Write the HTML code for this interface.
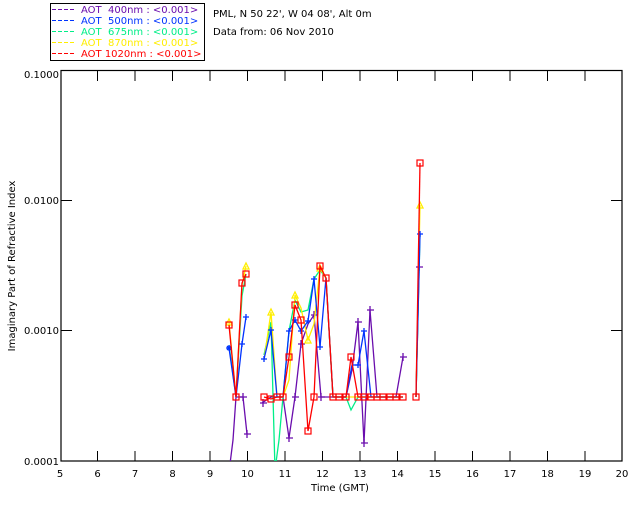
<!DOCTYPE html>
<html><head><style>
html,body{margin:0;padding:0;background:#fff;}
body{width:640px;height:512px;overflow:hidden;font-family:"DejaVu Sans","Liberation Sans",sans-serif;}
svg text{font-family:"DejaVu Sans","Liberation Sans",sans-serif;font-size:10px;}
</style></head><body>
<svg width="640" height="512" xmlns="http://www.w3.org/2000/svg">
<defs>
<clipPath id="c"><rect x="61" y="71" width="561" height="390"/></clipPath>
</defs>
<!-- legend -->
<rect x="50.5" y="3.5" width="154" height="57" fill="none" stroke="#000"/>
<g stroke-dasharray="4,2" stroke-width="1">
<line x1="52" y1="9.5" x2="74" y2="9.5" stroke="#6a0dad"/>
<line x1="52" y1="20.5" x2="74" y2="20.5" stroke="#0033ff"/>
<line x1="52" y1="31.5" x2="74" y2="31.5" stroke="#00ee88"/>
<line x1="52" y1="42.5" x2="74" y2="42.5" stroke="#ffee00"/>
<line x1="52" y1="53.5" x2="74" y2="53.5" stroke="#ff0000"/>
</g>
<text x="81" y="13" fill="#6a0dad" xml:space="preserve">AOT  400nm : &lt;0.001&gt;</text>
<text x="81" y="24" fill="#0033ff" xml:space="preserve">AOT  500nm : &lt;0.001&gt;</text>
<text x="81" y="35" fill="#00ee88" xml:space="preserve">AOT  675nm : &lt;0.001&gt;</text>
<text x="81" y="46" fill="#ffee00" xml:space="preserve">AOT  870nm : &lt;0.001&gt;</text>
<text x="81" y="57" fill="#ff0000" xml:space="preserve">AOT 1020nm : &lt;0.001&gt;</text>
<text x="213" y="17" fill="#000">PML, N 50 22', W 04 08', Alt 0m</text>
<text x="213" y="35" fill="#000">Data from: 06 Nov 2010</text>
<!-- axes -->
<rect x="61" y="70.5" width="561" height="390.5" fill="none" stroke="#000" stroke-width="1.2"/>
<g stroke="#000" stroke-width="1">
<path d="M97.5 461v-10M135 461v-10M172.5 461v-10M210 461v-10M247.5 461v-10M285 461v-10M322.5 461v-10M360 461v-10M397.5 461v-10M435 461v-10M472.5 461v-10M510 461v-10M547.5 461v-10M585 461v-10"/>
<path d="M97.5 71v10M135 71v10M172.5 71v10M210 71v10M247.5 71v10M285 71v10M322.5 71v10M360 71v10M397.5 71v10M435 71v10M472.5 71v10M510 71v10M547.5 71v10M585 71v10"/>
<path d="M61 200.5h11M61 330.5h11M622 200.5h-11M622 330.5h-11"/>
</g>
<g fill="#000" text-anchor="end">
<text x="59" y="78">0.1000</text>
<text x="59" y="204">0.0100</text>
<text x="59" y="334">0.0010</text>
<text x="59" y="465">0.0001</text>
</g>
<g fill="#000" text-anchor="middle">
<text x="60" y="477">5</text><text x="97.5" y="477">6</text><text x="135" y="477">7</text><text x="172.5" y="477">8</text><text x="210" y="477">9</text><text x="247.5" y="477">10</text><text x="285" y="477">11</text><text x="322.5" y="477">12</text><text x="360" y="477">13</text><text x="397.5" y="477">14</text><text x="435" y="477">15</text><text x="472.5" y="477">16</text><text x="510" y="477">17</text><text x="547.5" y="477">18</text><text x="585" y="477">19</text><text x="622" y="477">20</text>
<text x="340" y="491">Time (GMT)</text>
<text transform="translate(15,266) rotate(-90)">Imaginary Part of Refractive Index</text>
</g>
<g clip-path="url(#c)" fill="none" stroke-width="1.3">
<!-- purple -->
<g stroke="#6a0dad">
<polyline points="228,480 233,440 236,397 243,397 247,434"/>
<polyline points="262,403 271,397 283,397 289,438 295,397 301,344 308,324 314,315 321,397 333,397 346,397 352,370 358,322 364,443 370,310 377,397 396,397 403,357"/>
<polyline points="416,397 419,267"/>
<path d="M240 397h7M243 393v8M244 434h7M247 430v8M260 403h7M263 399v8M286 438h7M289 434v8M292 397h7M295 393v8M298 344h7M301 340v8M311 315h7M314 311v8M318 397h7M321 393v8M355 322h7M358 318v8M361 443h7M364 439v8M367 310h7M370 306v8M400 357h7M403 353v8M416 267h7M419 263v8"/>
</g>
<!-- green -->
<g stroke="#00ee88">
<polyline points="229,345 236,397 242,296 246,274"/>
<polyline points="264,355 271,322 275,470 279,440 283,397 289,331 295,300 301,312 308,310 314,279 320,270 326,278 333,397 346,397 351,410 358,397 403,397"/>
<polyline points="416,397 420,234"/>
</g>
<!-- yellow -->
<g stroke="#ffee00">
<polyline points="229,322 236,397 242,285 246,266"/>
<polyline points="264,360 271,312 277,397 283,397 289,380 295,295 301,308 308,340 314,324 320,268 326,278 333,397 403,397"/>
<polyline points="416,397 420,205"/>
<path d="M226 325l3-6 3 6zM243 269l3-6 3 6zM268 315l3-6 3 6zM292 298l3-6 3 6zM305 343l3-6 3 6zM317 271l3-6 3 6zM417 208l3-6 3 6z"/>
</g>
<!-- blue -->
<g stroke="#0033ff">
<polyline points="229,348 236,397 242,344 246,317"/>
<polyline points="264,359 271,330 277,397 283,397 289,331 295,320 301,331 308,321 314,279 320,347 326,278 333,397 346,397 352,365 358,365 364,331 371,397 403,397"/>
<polyline points="416,397 420,234"/>
<path d="M226 348h6M229 345v6M227 346l4 4M231 346l-4 4M239 344h6M242 341v6M243 317h6M246 314v6M261 359h6M264 356v6M268 330h6M271 327v6M286 331h6M289 328v6M292 320h6M295 317v6M298 331h6M301 328v6M305 321h6M308 318v6M311 279h6M314 276v6M317 347h6M320 344v6M355 365h6M358 362v6M361 331h6M364 328v6M417 234h6M420 231v6"/>
</g>
<!-- red -->
<g stroke="#ff0000">
<polyline points="229,325 236,397 242,283 246,274"/>
<polyline points="264,397 271,399 277,397 283,397 289,357 295,305 301,320 308,431 314,397 320,266 326,278 333,397 346,397 351,357 358,397 403,397"/>
<polyline points="416,397 420,163"/>
<g stroke-width="1.2">
<rect x="226" y="322" width="6" height="6"/><rect x="233" y="394" width="6" height="6"/><rect x="239" y="280" width="6" height="6"/><rect x="243" y="271" width="6" height="6"/>
<rect x="261" y="394" width="6" height="6"/><rect x="268" y="396" width="6" height="6"/><rect x="274" y="394" width="6" height="6"/><rect x="280" y="394" width="6" height="6"/><rect x="286" y="354" width="6" height="6"/><rect x="292" y="302" width="6" height="6"/><rect x="298" y="317" width="6" height="6"/><rect x="305" y="428" width="6" height="6"/><rect x="311" y="394" width="6" height="6"/><rect x="317" y="263" width="6" height="6"/><rect x="323" y="275" width="6" height="6"/>
<rect x="330" y="394" width="6" height="6"/><rect x="336" y="394" width="6" height="6"/><rect x="343" y="394" width="6" height="6"/><rect x="348" y="354" width="6" height="6"/><rect x="355" y="394" width="6" height="6"/><rect x="361" y="394" width="6" height="6"/><rect x="368" y="394" width="6" height="6"/><rect x="374" y="394" width="6" height="6"/><rect x="380" y="394" width="6" height="6"/><rect x="387" y="394" width="6" height="6"/><rect x="393" y="394" width="6" height="6"/><rect x="400" y="394" width="6" height="6"/>
<rect x="413" y="394" width="6" height="6"/><rect x="417" y="160" width="6" height="6"/>
</g>
</g>
</g>
</svg>
</body></html>
